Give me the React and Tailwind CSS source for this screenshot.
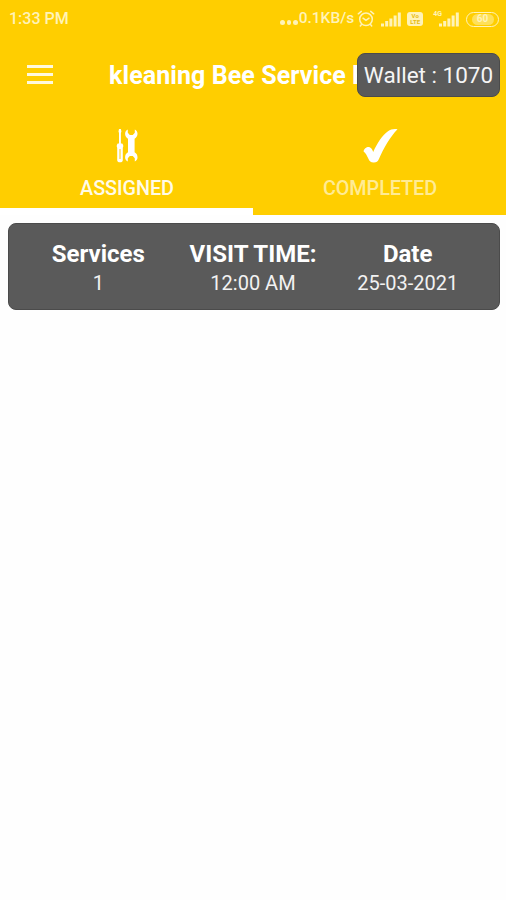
import React, { useState } from 'react';

const visits = [
  { id: 1, services: '1', time: '12:00 AM', date: '25-03-2021' },
];

const AlarmIcon = () => (
  <svg width="18" height="18" viewBox="0 0 18 18" fill="none" stroke="currentColor" strokeWidth="1.5" strokeLinecap="round">
    <circle cx="9" cy="9.3" r="6.3" />
    <path d="M6 8.200 9 10.400l3-2.200M1.300 3.800l3-2.400M16.700 3.800l-3-2.400M4.300 14.700l-1 1.300M13.700 14.700l1 1.300" />
  </svg>
);

const SignalIcon = () => (
  <svg width="20" height="15" viewBox="0 0 20 15" fill="currentColor">
    <rect x="0" y="11.5" width="3" height="3" />
    <rect x="4.2" y="9" width="3" height="5.5" />
    <rect x="8.4" y="6.5" width="3" height="8" />
    <rect x="12.6" y="3.5" width="3" height="11" />
    <rect x="16.8" y="0.5" width="3" height="14" />
  </svg>
);

const ToolsIcon = () => (
  <svg width="22" height="36" viewBox="0 0 22 36" fill="currentColor">
    {/* screwdriver */}
    <path d="M3 1h1.900l.5 2.600-.5 1.400v11H3V5l-.5-1.400z" />
    <path fillRule="evenodd" d="M1.700 15.500h4.600c.6.900 1 1.500 1 2.500 0 .9-.5 1.200-.5 2.200v11.700c0 1.600-1 2.400-2.800 2.400s-2.800-.8-2.800-2.400V20.200c0-1-.5-1.300-.5-2.200 0-1 .4-1.600 1-2.500zM3.500 21v10h1V21z" />
    {/* wrench */}
    <path d="M11.800 1.500v3.300l2 2.200h3l2-2.200V1.500c1.800.8 2.700 2.300 2.700 4.300 0 2.200-1 3.700-2.900 4.900v13.600c1.900 1.200 2.900 2.700 2.900 4.900 0 2-.9 3.500-2.700 4.300v-3.300l-2-2.200h-3l-2 2.200v3.300c-1.800-.8-2.700-2.300-2.700-4.300 0-2.200 1-3.700 2.900-4.900V10.700c-1.900-1.200-2.900-2.700-2.900-4.900 0-2 .9-3.500 2.700-4.300z" />
  </svg>
);

const CheckIcon = () => (
  <svg width="35" height="36" viewBox="0 0 35 36" fill="currentColor">
    <path d="M.6 23.500c.2-2.800 3.500-5 6-4.300 2 .6 2.700 2.300 3.600 4.800C14.500 14.500 19 7.500 25 3.200 27.700 1.200 31 .6 34.500 1.200 27 9 20.600 20 15.800 31.300c-1 2.400-2.600 3.300-5.200 3.200-3 0-4-1.100-5.200-3.700-1.400-3-2.400-5.400-4.800-7.300z" />
  </svg>
);

const StatusBar = () => (
  <div className="flex h-[38px] items-center pl-[9px] pr-[7px] text-[#fff3b8]">
    <span className="text-[16px] font-medium leading-none">1:33 PM</span>
    <div className="ml-auto flex items-center">
      <span className="mr-[1px] mt-[7px] flex gap-[2px]">
        <i className="size-[4.500px] rounded-full bg-current" />
        <i className="size-[4.500px] rounded-full bg-current" />
        <i className="size-[4.500px] rounded-full bg-current" />
      </span>
      <span className="mr-[3px] text-[15.500px] font-medium leading-none">0.1KB/s</span>
      <AlarmIcon />
      <span className="ml-[6px]"><SignalIcon /></span>
      <span className="ml-[6px] flex h-[14px] w-[16px] flex-col items-center justify-center rounded-[3px] bg-current">
        <span className="text-[6px] font-bold leading-[6px] text-[#e8bb10]">Vo</span>
        <span className="text-[6px] font-bold leading-[6px] text-[#e8bb10]">LTE</span>
      </span>
      <span className="ml-[10px] self-start text-[7px] font-bold leading-[8px]">4G</span>
      <span className="-ml-[3px]"><SignalIcon /></span>
      <span className="ml-[7px] flex h-[15px] w-[33px] items-center justify-center rounded-full border-[1.500px] border-current p-[1px]">
        <span className="flex h-full w-[22px] items-center justify-center rounded-full bg-[#fff5c4]/45 text-[10px] font-bold leading-none">60</span>
      </span>
    </div>
  </div>
);

const Tab = ({ label, icon, active, onClick }) => (
  <button
    onClick={onClick}
    className={`flex h-[103px] flex-1 flex-col items-center border-b-[7px] pl-px pt-[16px] ${active ? 'border-white text-[#fffbe8]' : 'border-[#ffce00] text-[#ffeb94]'}`}
  >
    <span className="text-white">{icon}</span>
    <span className="mt-[13px] text-[19.800px] font-medium leading-[24px] tracking-[-0.05px]">{label}</span>
  </button>
);

const VisitCard = ({ visit }) => (
  <div className="ml-[8px] mr-[6px] mt-[8px] grid h-[87px] grid-cols-3 rounded-[8px] border border-[#4b4b4b] bg-[#5a5a5a] pl-[12px] pr-[14px] pt-[15px] text-center text-white">
    {[
      ['Services', visit.services],
      ['VISIT TIME:', visit.time],
      ['Date', visit.date],
    ].map(([title, value]) => (
      <div key={title} className="whitespace-nowrap">
        <div className="text-[24px] font-bold leading-[30px]">{title}</div>
        <div className="text-[20px] leading-[29px] text-[#f2f2f2]">{value}</div>
      </div>
    ))}
  </div>
);

const App = () => {
  const [tab, setTab] = useState('assigned');

  return (
    <div className="min-h-screen bg-[#fefefe] font-[Roboto,sans-serif]">
      <header className="bg-[#ffce00]">
        <StatusBar />
        <div className="flex h-[74px] items-center pl-[27px] pr-[6px]">
          <button className="mb-[2px] flex w-[26px] shrink-0 flex-col gap-[5px]" aria-label="Menu">
            <span className="h-[3px] bg-[#fff9dd]" />
            <span className="h-[3px] bg-[#fff9dd]" />
            <span className="h-[3px] bg-[#fff9dd]" />
          </button>
          <h1 className="ml-[56px] min-w-0 flex-1 overflow-hidden whitespace-nowrap pt-[2px] text-[25px] font-bold leading-[32px] tracking-[0.08px] text-white">
            kleaning Bee Service P
          </h1>
          <div className="flex h-[44px] w-[143px] shrink-0 items-center justify-center whitespace-nowrap rounded-[8px] border border-[#4b4b4b] bg-[#5a5a5a] pt-[2px] text-[22.500px] text-[#f5f5f5]">
            Wallet : 1070
          </div>
        </div>
        <nav className="flex">
          <Tab label="ASSIGNED" icon={<ToolsIcon />} active={tab === 'assigned'} onClick={() => setTab('assigned')} />
          <Tab label="COMPLETED" icon={<CheckIcon />} active={tab === 'completed'} onClick={() => setTab('completed')} />
        </nav>
      </header>
      {tab === 'assigned' && visits.map((visit) => <VisitCard key={visit.id} visit={visit} />)}
    </div>
  );
};

export default App;
